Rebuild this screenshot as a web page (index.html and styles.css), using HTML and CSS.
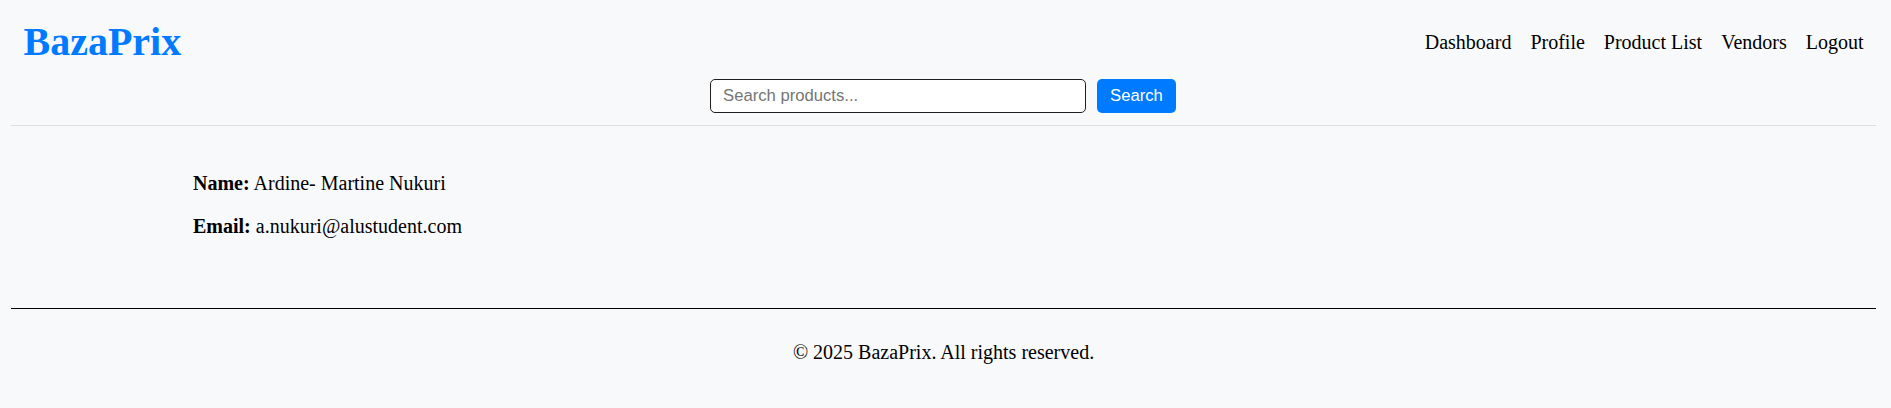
FILE: index.html
```html
<!DOCTYPE html>
<html lang="en">
<head>
<meta charset="utf-8">
<title>BazaPrix - Profile</title>
<link rel="stylesheet" href="styles.css">
</head>
<body>
<div class="page">
  <header class="site-header">
    <div class="top-row">
      <h1 class="logo">BazaPrix</h1>
      <nav class="main-nav">
        <a href="#">Dashboard</a>
        <a href="#">Profile</a>
        <a href="#">Product List</a>
        <a href="#">Vendors</a>
        <a href="#">Logout</a>
      </nav>
    </div>
    <form class="search" onsubmit="return false;">
      <input class="search-input" type="text" placeholder="Search products...">
      <button class="search-btn" type="submit">Search</button>
    </form>
  </header>
  <main class="profile">
    <p class="field"><strong>Name:</strong> Ardine- Martine Nukuri</p>
    <p class="field"><strong>Email:</strong> a.nukuri@alustudent.com</p>
  </main>
  <footer class="site-footer">
    <p class="copy">&copy; 2025 BazaPrix. All rights reserved.</p>
  </footer>
</div>
</body>
</html>
```
FILE: styles.css
```css
html, body {
  margin: 0;
  padding: 0;
  background: #f8f9fa;
}
body {
  font-family: "Liberation Serif", "Times New Roman", serif;
  font-size: 20px;
  line-height: 23px;
  color: #000;
}
.page {
  padding: 0 15px 0 11px;
}
.site-header {
  padding: 19px 12.5px 12px;
  border-bottom: 1px solid #dcdfe2;
}
.top-row {
  display: flex;
  justify-content: space-between;
  align-items: center;
}
.logo {
  margin: 0;
  font-size: 40px;
  line-height: 46px;
  font-weight: bold;
  color: #007bff;
}
.main-nav {
  display: flex;
  gap: 19px;
}
.main-nav a {
  color: #000;
  text-decoration: none;
}
.search {
  display: flex;
  justify-content: center;
  gap: 11px;
  margin: 14px 0 0;
  padding-right: 1px;
}
.search-input {
  box-sizing: border-box;
  width: 376px;
  height: 34px;
  padding: 0 12.5px;
  border: 1px solid #1f1f1f;
  border-radius: 5px;
  background: #fff;
  font-family: "Liberation Sans", Arial, sans-serif;
  font-size: 16.67px;
  color: #000;
  outline: none;
}
.search-input::placeholder {
  color: #757575;
}
.search-btn {
  box-sizing: border-box;
  height: 34px;
  padding: 0 13.6px;
  border: none;
  border-radius: 5px;
  background: #007bff;
  color: #fff;
  font-family: "Liberation Sans", Arial, sans-serif;
  font-size: 16.67px;
  cursor: pointer;
}
.profile {
  display: flex;
  flex-direction: column;
  gap: 20.6px;
  padding: 45.75px 0 69.5px 182px;
}
.field {
  margin: 0;
}
.site-footer {
  border-top: 1px solid #000;
  padding-top: 32.5px;
  text-align: center;
}
.copy {
  margin: 0;
}
```
